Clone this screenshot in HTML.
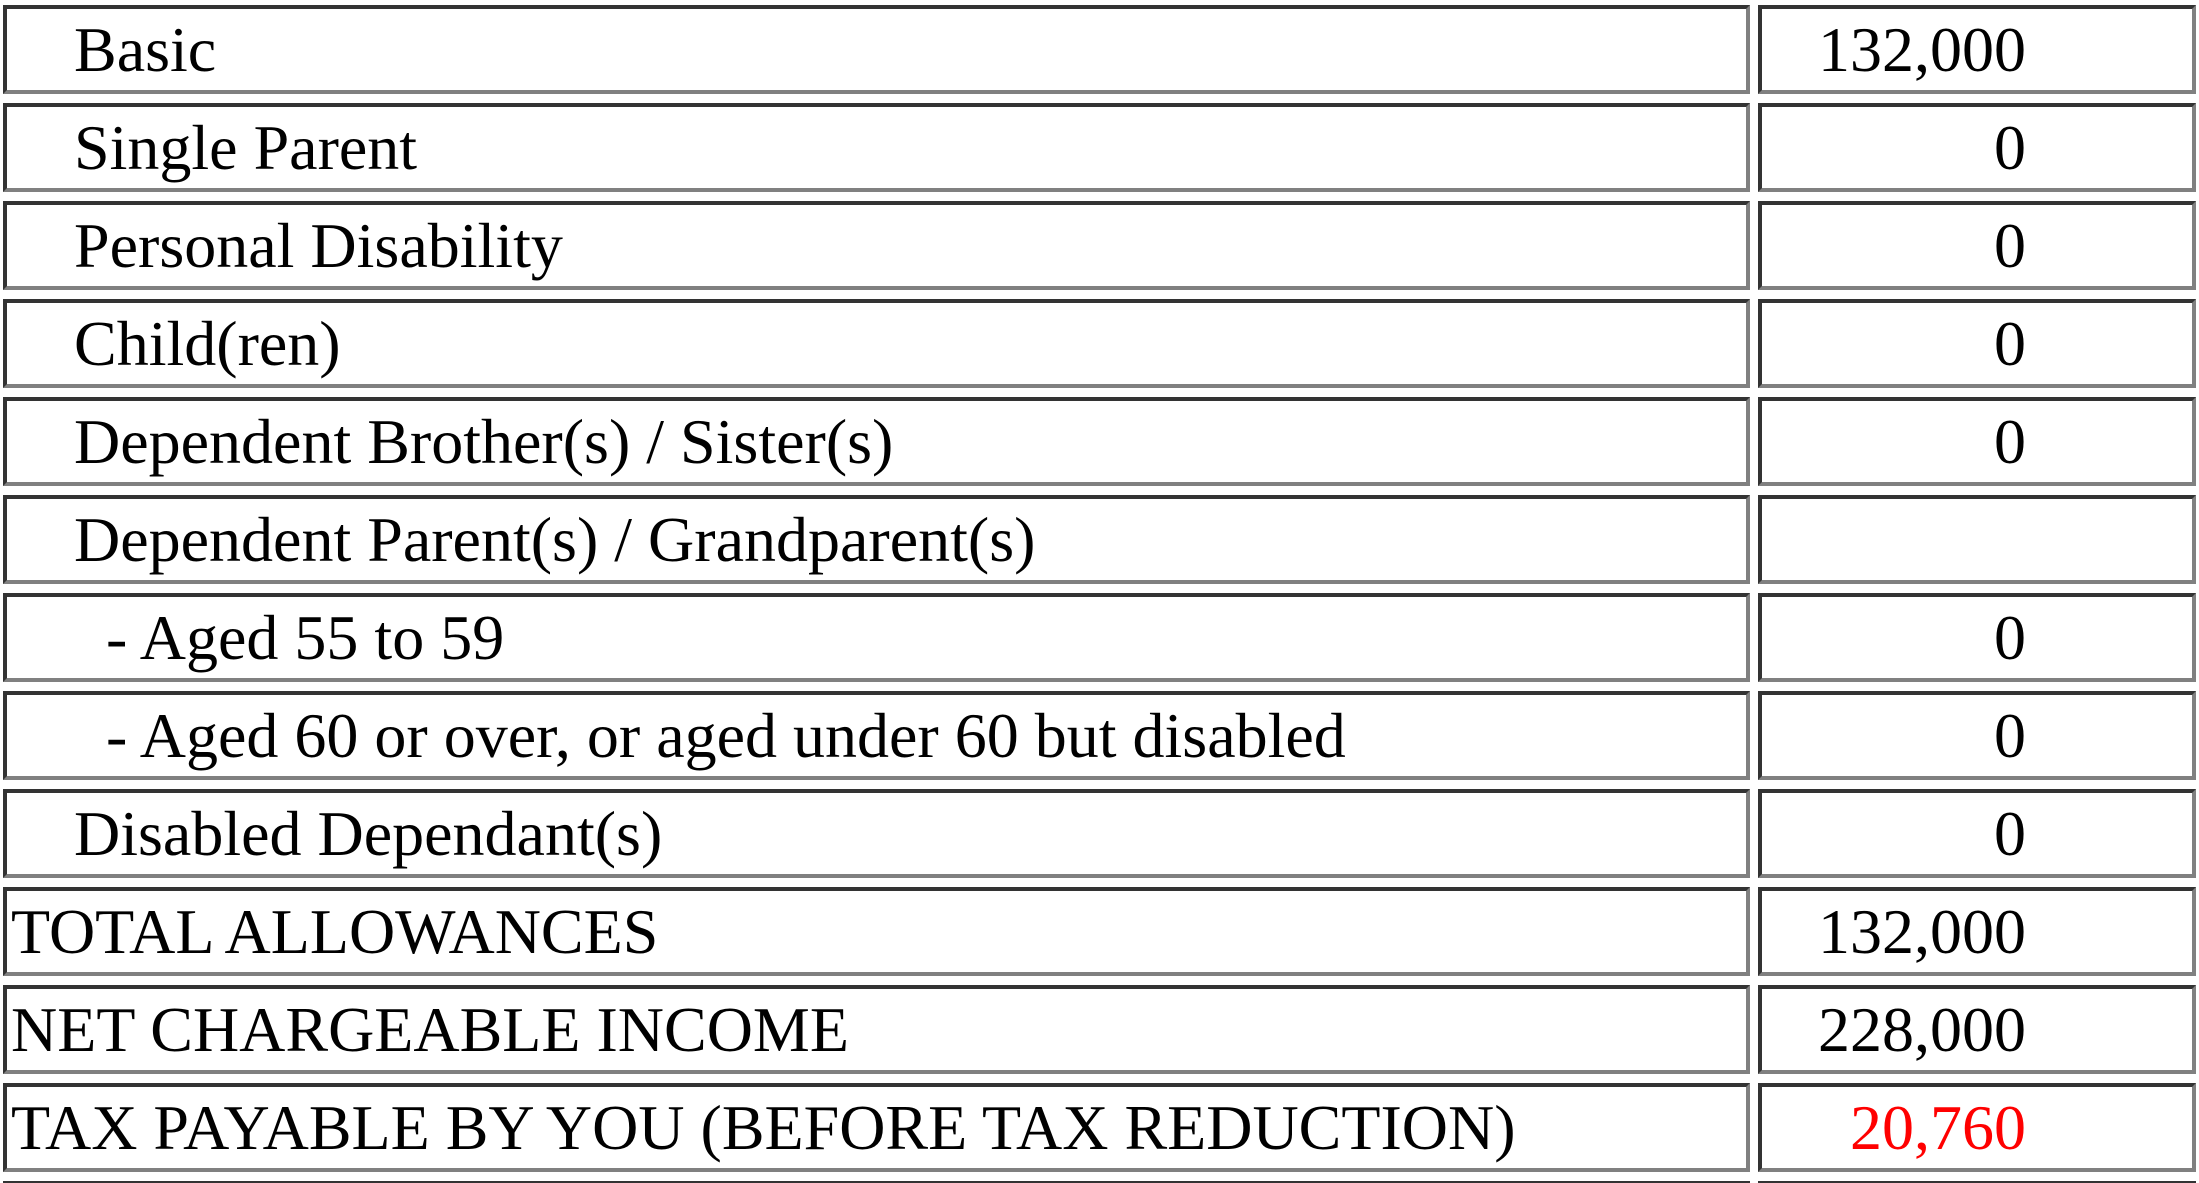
<!DOCTYPE html>
<html><head><meta charset="utf-8"><style>
html,body{margin:0;padding:0;background:#fff;width:2199px;height:1183px;overflow:hidden;}
#w{position:relative;width:2199px;height:1183px;overflow:hidden;}
.c{position:absolute;box-sizing:border-box;height:89px;border-style:solid;border-width:4px;border-color:#333 #808080 #808080 #333;font-family:"Liberation Serif",serif;font-size:64px;line-height:80px;padding-top:1px;white-space:nowrap;color:#000;}
.l{left:3px;width:1747px;padding-left:67px;}
.l.a{padding-left:99px;}
.l.t{padding-left:4px;}
.r{left:1758px;width:438px;text-align:right;padding-right:166px;}
.e{position:absolute;top:1181px;height:2px;background:#333;}
</style></head><body><div id="w">
<div class="c l" style="top:5px">Basic</div><div class="c r" style="top:5px">132,000</div>
<div class="c l" style="top:103px">Single Parent</div><div class="c r" style="top:103px">0</div>
<div class="c l" style="top:201px">Personal Disability</div><div class="c r" style="top:201px">0</div>
<div class="c l" style="top:299px">Child(ren)</div><div class="c r" style="top:299px">0</div>
<div class="c l" style="top:397px">Dependent Brother(s) / Sister(s)</div><div class="c r" style="top:397px">0</div>
<div class="c l" style="top:495px">Dependent Parent(s) / Grandparent(s)</div><div class="c r" style="top:495px"></div>
<div class="c l a" style="top:593px">- Aged 55 to 59</div><div class="c r" style="top:593px">0</div>
<div class="c l a" style="top:691px">- Aged 60 or over, or aged under 60 but disabled</div><div class="c r" style="top:691px">0</div>
<div class="c l" style="top:789px">Disabled Dependant(s)</div><div class="c r" style="top:789px">0</div>
<div class="c l t" style="top:887px">TOTAL ALLOWANCES</div><div class="c r" style="top:887px">132,000</div>
<div class="c l t" style="top:985px">NET CHARGEABLE INCOME</div><div class="c r" style="top:985px">228,000</div>
<div class="c l t" style="top:1083px">TAX PAYABLE BY YOU (BEFORE TAX REDUCTION)</div><div class="c r" style="top:1083px;color:#f00">20,760</div>
<div class="e" style="left:3px;width:1747px"></div><div class="e" style="left:1758px;width:438px"></div>
</div></body></html>
